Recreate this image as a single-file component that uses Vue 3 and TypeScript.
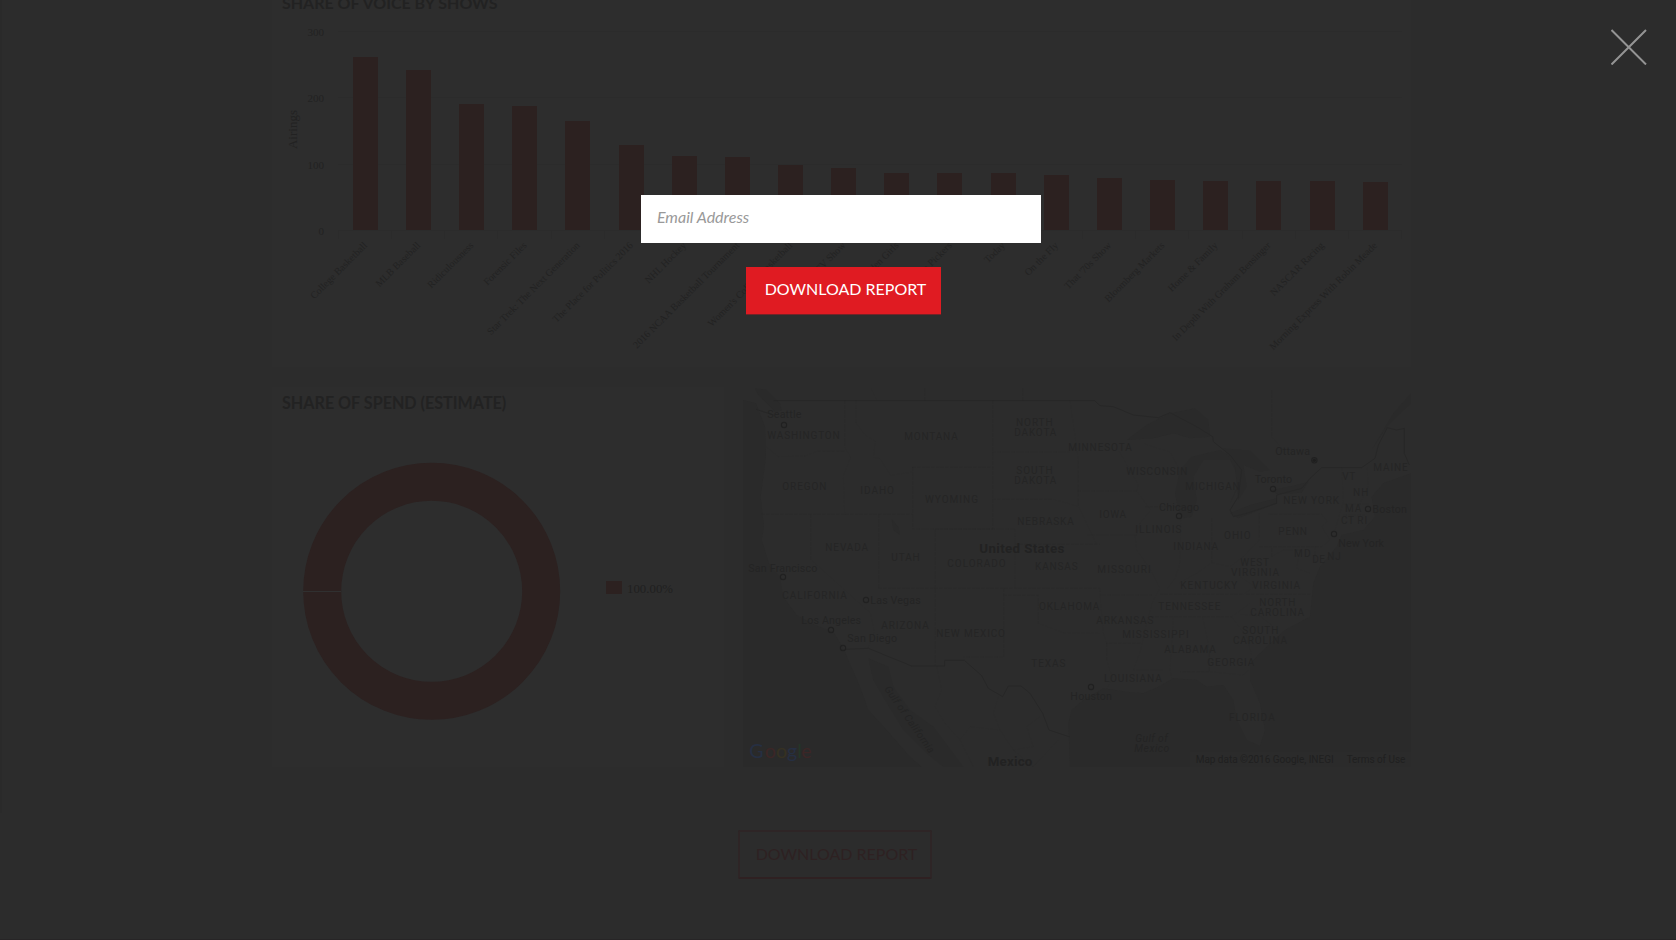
<script setup lang="ts">
import { ref } from 'vue'

type Label = [text: string, x: number, y: number, length: number]

const email = ref('')

const shows: { name: string; top: number }[] = [
  { name: 'College Basketball', top: 57 },
  { name: 'MLB Baseball', top: 70 },
  { name: 'Ridiculousness', top: 104 },
  { name: 'Forensic Files', top: 106 },
  { name: 'Star Trek: The Next Generation', top: 121 },
  { name: 'The Place for Politics 2016', top: 145 },
  { name: 'NHL Hockey', top: 156 },
  { name: '2016 NCAA Basketball Tournament', top: 157 },
  { name: "Women's College Basketball", top: 165 },
  { name: 'Garage TV Show', top: 168 },
  { name: 'The Golden Girls', top: 173 },
  { name: 'American Pickers', top: 173 },
  { name: 'Today', top: 173 },
  { name: 'On the Fly', top: 175 },
  { name: "That '70s Show", top: 178 },
  { name: 'Bloomberg Markets', top: 180 },
  { name: 'Home & Family', top: 181 },
  { name: 'In Depth With Graham Bensinger', top: 181 },
  { name: 'NASCAR Racing', top: 181 },
  { name: 'Morning Express With Robin Meade', top: 182 },
]
const baseline = 230
const step = 53.15
const barX = (i: number) => Math.round(80.8 + i * step)
const ticks = [
  { label: '300', y: 31 },
  { label: '200', y: 97 },
  { label: '100', y: 164 },
  { label: '0', y: 230 },
]

// Map labels: text, start x, baseline y and drawn length in map units (three per pixel)
const states: Label[] = [
  ['WASHINGTON', 112, 206, 217], ['MONTANA', 523, 209, 160], ['NORTH', 858, 169, 110], ['DAKOTA', 853, 199, 126],
  ['SOUTH', 859, 313, 109], ['DAKOTA', 853, 343, 126], ['OREGON', 157, 361, 132], ['IDAHO', 391, 373, 101],
  ['WYOMING', 585, 398, 159], ['NEBRASKA', 862, 466, 169], ['NEVADA', 286, 544, 128], ['UTAH', 484, 574, 85],
  ['COLORADO', 652, 592, 175], ['KANSAS', 915, 601, 128], ['CALIFORNIA', 157, 688, 193], ['ARIZONA', 454, 778, 142],
  ['NEW MEXICO', 619, 802, 206], ['OKLAHOMA', 927, 721, 181], ['TEXAS', 904, 892, 102], ['MINNESOTA', 1015, 244, 190],
  ['WISCONSIN', 1189, 316, 183], ['MICHIGAN', 1366, 361, 163], ['IOWA', 1108, 445, 80], ['ILLINOIS', 1216, 490, 138],
  ['INDIANA', 1330, 541, 134], ['OHIO', 1482, 508, 80], ['PENN', 1645, 496, 86], ['NEW YORK', 1660, 403, 167],
  ['MAINE', 1930, 304, 103], ['VT', 1837, 331, 39], ['NH', 1869, 379, 46], ['MA', 1845, 427, 49],
  ['CT', 1833, 463, 39], ['RI', 1882, 463, 30], ['MD', 1692, 562, 50], ['DE', 1747, 580, 38], ['NJ', 1792, 571, 40],
  ['WEST', 1531, 588, 86], ['VIRGINIA', 1503, 619, 144], ['KENTUCKY', 1351, 658, 171], ['VIRGINIA', 1567, 658, 143],
  ['MISSOURI', 1102, 610, 160], ['TENNESSEE', 1285, 721, 186], ['NORTH', 1588, 709, 108], ['CAROLINA', 1561, 739, 161],
  ['SOUTH', 1537, 792, 108], ['CAROLINA', 1509, 822, 162], ['ARKANSAS', 1099, 763, 171], ['MISSISSIPPI', 1177, 805, 199],
  ['ALABAMA', 1303, 850, 154], ['GEORGIA', 1432, 889, 141], ['LOUISIANA', 1122, 937, 173], ['FLORIDA', 1497, 1054, 137],
]
const cities: Label[] = [
  ['Seattle', 112, 145, 102], ['San Francisco', 55, 605, 207], ['Las Vegas', 421, 701, 151], ['Los Angeles', 214, 761, 179],
  ['San Diego', 352, 815, 149], ['Ottawa', 1636, 254, 104], ['Toronto', 1574, 338, 112], ['Chicago', 1287, 422, 120],
  ['Boston', 1927, 428, 104], ['New York', 1825, 532, 137], ['Houston', 1021, 991, 125],
]
const pins: [number, number][] = [
  [162, 165], [159, 621], [408, 690], [303, 780], [339, 834], [1753, 271],
  [1629, 357], [1347, 438], [1914, 417], [1812, 492], [1083, 951],
]
const logo: [letter: string, x: number, tone: string][] = [
  ['G', 58, 'blue'], ['o', 104, 'crimson'], ['o', 138, 'yellow'], ['g', 171, 'blue'], ['l', 202, 'green'], ['e', 214, 'crimson'],
]
const stateLines: string[] = [
  'M344 92V232L362 262L340 318L344 433', 'M108 230L145 260L225 258L262 244H344', 'M378 92V158L405 195L436 214L430 262L450 266L482 316L548 306',
  'M548 292H788V477H548Z', 'M788 92V292M788 246H1020M788 388H970L1042 408', 'M95 433H548M242 433V568L422 730L432 785L414 835',
  'M446 433V655M446 655H1110M616 477V888M616 477H855V655', 'M821 655V861H700M821 676H925V760L1000 788L1110 790',
  'M855 523H1110', 'M1020 92L1045 270V408L1100 523', 'M1042 363H1220L1262 420L1230 460L1220 495H1072', 'M1168 245L1225 345L1220 363',
  'M1215 495L1220 540L1262 600L1290 655L1270 690L1255 740L1232 840L1210 900H1300', 'M1110 655V675H1265M1110 675L1120 790L1130 820H1232M1130 820V870L1146 920L1130 960',
  'M1352 445L1350 580L1335 625L1312 655M1445 445V578L1400 610L1345 640', 'M1445 578L1500 590L1540 560L1588 510V430M1588 530H1775L1800 510L1775 470L1792 455L1775 433H1615',
  'M1290 673H1540L1575 650L1530 620M1550 673H1745', 'M1262 740H1505L1560 700M1330 740L1320 900L1325 925M1418 740L1438 840V905H1350M1438 905L1540 915L1555 900',
  'M1505 740L1550 800L1565 855M1530 733L1590 738L1625 765', 'M1625 535V560L1660 540L1710 540L1700 595L1740 610M1755 530V575',
  'M1835 293L1840 395L1815 480M1912 293L1914 350L1885 410M1840 402H1915M1840 435H1905', 'M1244 222L1320 246L1350 300M1245 410H1340',
  'M620 888L635 960L615 1010L645 1060L690 1110L730 1190M805 980L790 1030L810 1080L720 1070L690 1110', 'M810 1080L850 1140L910 1130L890 1070L930 1040M850 1140L910 1190L985 1110',
  'M440 90L423 55M584 92V52M878 92V52M1625 60V200L1660 240',
]
</script>

<template>
  <div class="page">
    <main class="dashboard">
      <section class="card shows">
        <h2 class="title">SHARE OF VOICE BY SHOWS</h2>
        <svg class="bars" width="1139" height="367" viewBox="0 0 1139 367">
          <g class="grid">
            <path v-for="t in ticks" :key="t.label" :d="`M66 ${t.y + 0.5}H1130`" />
            <path v-for="n in 21" :key="n" :d="`M${Math.round(66 + (n - 1) * step) + 0.5} 230V239`" />
          </g>
          <text v-for="t in ticks" :key="t.label" class="tick" x="52" :y="t.y + 4.5">{{ t.label }}</text>
          <text class="axis" transform="translate(25 149) rotate(-90)" textLength="39">Airings</text>
          <g v-for="(s, i) in shows" :key="s.name">
            <rect class="red" :x="barX(i)" :y="s.top" width="25" :height="baseline - s.top" />
            <text class="show" :transform="`translate(${95.8 + i * step} 246) rotate(-45)`">{{ s.name }}</text>
          </g>
        </svg>
      </section>

      <div class="row">
        <section class="card spend">
          <h2 class="title">SHARE OF SPEND (ESTIMATE)</h2>
          <svg class="donut" width="452" height="380" viewBox="0 0 452 380">
            <circle class="ring" cx="159.7" cy="204.3" r="109.5" />
            <path class="seam" d="M31 204.5H69" />
            <rect class="red" x="334" y="194" width="16" height="13" />
            <text class="legend" x="355" y="206" textLength="46">100.00%</text>
          </svg>
        </section>

        <section class="card map">
          <svg width="668" height="380" viewBox="39 51 2004 1140">
            <g class="water">
              <path d="M39 90L78 100L105 170L108 260L92 380L102 470L95 510L120 590L150 620L160 680L200 735L255 765L310 785L340 835L390 950L415 1020L470 1080L540 1160L575 1191H39Z" />
              <path d="M75 55L110 60L150 100L155 122L135 125L85 75Z" />
              <path d="M415 865L475 890L490 950L540 1020L610 1070L655 1130L700 1191H640L590 1150L520 1080L465 990L430 930Z" />
              <path d="M1020 1191L1015 1060L1025 1020L1060 990L1120 955L1190 965L1240 970L1285 950L1330 925L1400 930L1430 950L1480 945L1510 990L1520 1050L1550 1110L1590 1128L1605 1080L1590 1000L1560 930L1560 880L1610 830L1665 780L1740 740L1750 640L1770 590L1820 530L1835 495L1900 480L1935 440L1925 380L1960 340L2043 310V1191Z" />
              <path d="M1190 210L1250 165L1320 130L1395 115L1435 150L1440 200L1380 205L1330 190L1270 205Z" />
              <path d="M1345 420L1335 370L1350 300L1385 260L1470 240L1520 270L1530 340L1500 400L1530 330L1500 270L1420 270L1390 320L1400 390L1385 440L1360 445Z" />
              <path d="M1480 235L1560 242L1620 300L1590 305L1540 285L1550 350L1525 390L1515 290Z" />
              <path d="M1500 430L1525 445L1640 400L1640 385L1560 405ZM1628 360L1700 345L1735 335L1715 368L1640 372Z" />
              <path d="M1925 240L1990 130L2043 70V100L1975 165Z" />
              <path d="M485 448L505 470L510 495L490 480Z" />
            </g>
            <path v-for="d in stateLines" :key="d" class="state-line" :d="d" />
            <path class="border" d="M78 118L130 135M130 92H1094L1110 107L1150 110L1210 135L1285 143L1320 128L1400 170L1448 200L1450 215L1500 255L1535 300L1525 380L1500 420L1510 440L1550 430L1640 400L1640 375L1715 355L1740 325L1775 293H1895L1935 265L1945 225L1972 173L2000 180L2023 175V250L2038 285" />
            <path class="border" d="M345 838L415 835L545 888H644V871H703L755 917L775 955L818 980L835 948H873L900 970L938 1030L957 1080L1020 1101" />

            <circle v-for="p in pins" :key="p.join()" class="pin" :cx="p[0]" :cy="p[1]" r="8" />
            <circle class="capital" cx="1753" cy="271" r="5" />
            <text v-for="[t, x, y, l] in states" :key="t + x" class="state" :x="x" :y="y" :textLength="l">{{ t }}</text>
            <text v-for="[t, x, y, l] in cities" :key="t" class="city" :x="x" :y="y" :textLength="l">{{ t }}</text>
            <text class="country" x="748" y="549" textLength="255">United States</text>
            <text class="country" x="773" y="1187" textLength="134">Mexico</text>
            <text class="sea" x="1216" y="1117" textLength="97">Gulf of</text>
            <text class="sea" x="1213" y="1147" textLength="105">Mexico</text>
            <text class="sea" transform="translate(462 957) rotate(55)" textLength="238">Gulf of California</text>
            <text v-for="[letter, x, tone] in logo" :key="x" :class="['google', tone]" :x="x" y="1164">{{ letter }}</text>
            <rect class="credit-bg" x="1380" y="1146" width="663" height="45" />
            <text class="credit" x="1397" y="1178" textLength="414">Map data ©2016 Google, INEGI</text>
            <text class="credit" x="1850" y="1178" textLength="176">Terms of Use</text>
          </svg>
        </section>
      </div>

      <button class="ghost" type="button">DOWNLOAD REPORT</button>
    </main>

    <form class="modal" @submit.prevent>
      <input v-model="email" class="email" type="text" placeholder="Email Address" />
      <button class="download" type="submit">DOWNLOAD REPORT</button>
    </form>
    <button class="close" type="button" aria-label="Close">
      <svg width="36" height="36" viewBox="0 0 36 36"><path d="M.5 1L35 35.5M35 1L.5 35.5" /></svg>
    </button>
  </div>
</template>

<style>
body {
  margin: 0;
  background: #2c2c2c;
}
</style>

<style scoped>
.page {
  position: relative;
  box-sizing: border-box;
  width: 1676px;
  height: 940px;
  overflow: hidden;
  background: #2c2c2c;
  border-bottom: 1px solid #272526;
  font-family: Lato, "Liberation Sans", sans-serif;
}
.page::before {
  content: "";
  position: absolute;
  top: 0;
  left: 0;
  width: 2px;
  height: 813px;
  background: #2a2a2a;
}
.dashboard {
  display: flex;
  flex-direction: column;
  width: 1139px;
  margin-left: 272px;
}
.card {
  position: relative;
  background: #2d2d2d;
}
.card svg {
  display: block;
}
.shows {
  height: 367px;
}
.row {
  display: flex;
  justify-content: space-between;
  height: 380px;
  margin-top: 20px;
}
.spend {
  width: 452px;
}
.map {
  width: 668px;
  background: #2c2c2c;
}
.title {
  position: absolute;
  top: 6px;
  left: 10px;
  margin: 0;
  font-size: 16.15px;
  line-height: 20px;
  font-weight: 700;
  color: #222;
  white-space: nowrap;
}
.shows .title {
  top: -7px;
  font-size: 16px;
}
.grid path {
  stroke: #2b2b2b;
  fill: none;
}
.red {
  fill: #2c2120;
}
.tick,
.axis,
.show,
.legend {
  font-family: "Liberation Serif", serif;
  fill: #222;
}
.tick {
  font-size: 11px;
  text-anchor: end;
}
.axis {
  font-size: 13px;
}
.show {
  font-size: 10px;
  text-anchor: end;
}
.legend {
  font-size: 12.8px;
  fill: #202020;
}
.ring {
  fill: none;
  stroke: #2c2120;
  stroke-width: 38;
}
.seam {
  stroke: #303030;
}
.water {
  fill: #2a2a2a;
}
.state-line {
  fill: none;
  stroke: #2a2a2a;
  stroke-width: 1.5;
  stroke-dasharray: 10 4;
}
.border {
  fill: none;
  stroke: #272727;
  stroke-width: 3;
}
.pin {
  fill: none;
  stroke: #212121;
  stroke-width: 3.5;
}
.capital {
  fill: #1e1e1e;
}
.state,
.city,
.country,
.sea,
.credit {
  font-family: Roboto, sans-serif;
}
.state {
  font-size: 30px;
  fill: #252525;
}
.city {
  font-size: 32px;
  fill: #242424;
}
.country {
  font-size: 40px;
  font-weight: 700;
  fill: #222;
}
.sea {
  font-size: 31px;
  font-style: italic;
  fill: #242424;
}
.google {
  font-family: Lato, sans-serif;
  font-size: 59px;
}
.blue {
  fill: #262f42;
}
.crimson {
  fill: #3c2626;
}
.yellow {
  fill: #363122;
}
.green {
  fill: #243628;
}
.credit-bg {
  fill: #2b2b2b;
}
.credit {
  font-size: 30px;
  fill: #202020;
}
.ghost,
.download,
.email,
.close {
  box-sizing: border-box;
  margin: 0;
  padding: 0;
  border: 0;
  border-radius: 0;
  font-family: inherit;
  font-size: 16px;
}
.ghost {
  width: 194px;
  height: 49px;
  margin: 63px 0 0 466px;
  padding: 0 0 2px 3px;
  background: transparent;
  border: 2px solid #2e2526;
  border-bottom-color: #2f2122;
  border-radius: 2px;
  color: #2e2122;
}
.modal {
  position: absolute;
  top: 195px;
  left: 641px;
  display: flex;
  flex-direction: column;
  width: 400px;
}
.email {
  width: 400px;
  height: 48px;
  padding: 0 16px 5px;
  background: #fff;
  outline: none;
}
.email::placeholder {
  color: #999;
  font-style: italic;
  opacity: 1;
}
.download {
  width: 195px;
  height: 48px;
  margin: 24px 0 0 105px;
  padding: 0 0 5px 4px;
  background: #e01b22;
  border-bottom: 1px solid #742327;
  color: #fff;
}
.close {
  position: absolute;
  top: 29px;
  left: 1611px;
  width: 36px;
  height: 36px;
  background: none;
}
.close svg {
  display: block;
}
.close path {
  fill: none;
  stroke: #949494;
  stroke-width: 2;
}
</style>
